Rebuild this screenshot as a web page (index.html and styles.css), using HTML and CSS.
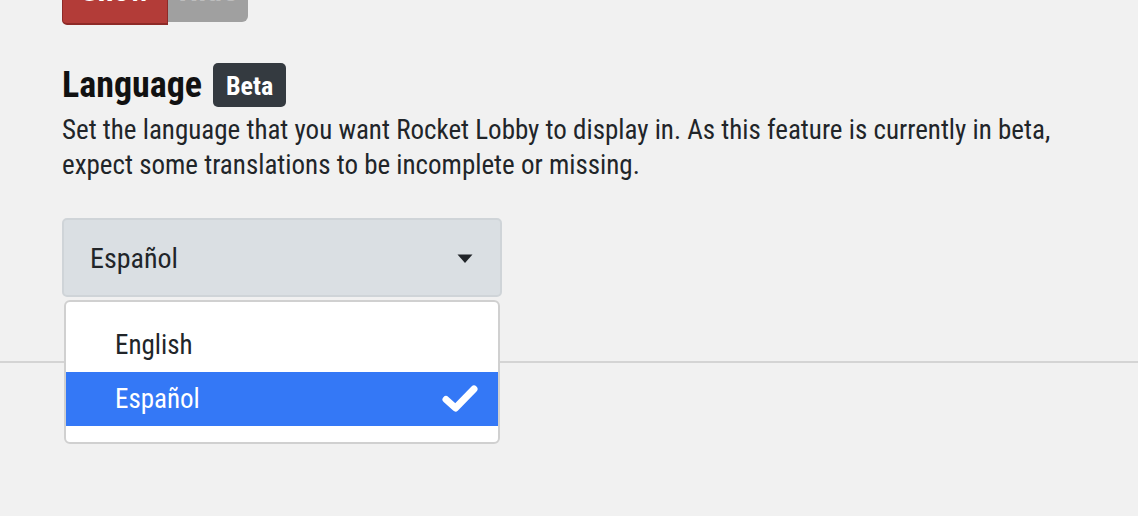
FILE: index.html
```html
<!DOCTYPE html>
<html lang="en">
<head>
<meta charset="utf-8">
<title>Settings</title>
<link rel="stylesheet" href="styles.css">
</head>
<body>
<div class="page">
  <section class="settings">
    <div class="toggle">
      <button class="btn btn-on">Show</button>
      <button class="btn btn-off">Hide</button>
    </div>
    <h2 class="title">Language <span class="badge">Beta</span></h2>
    <p class="desc">Set the language that you want Rocket Lobby to display in. As this feature is currently in beta, expect some translations to be incomplete or missing.</p>
    <div class="select-wrap">
      <div class="select">
        <span>Español</span>
        <svg class="caret" width="16" height="10" viewBox="0 0 16 10"><path d="M0.5 0.5 L15.5 0.5 L8 9 Z" fill="#212529"/></svg>
      </div>
      <ul class="menu">
        <li class="item">English</li>
        <li class="item active">Español
          <svg class="check" width="36" height="28" viewBox="0 0 36 28"><path d="M4 14.5 L13.5 23 L32 4" fill="none" stroke="#fff" stroke-width="7" stroke-linecap="round" stroke-linejoin="round"/></svg>
        </li>
      </ul>
    </div>
  </section>
  <hr class="divider">
</div>
</body>
</html>
```

FILE: styles.css
```css
* { box-sizing: border-box; }
html, body {
  margin: 0;
  padding: 0;
  background: #f1f1f1;
  height: 100%;
  overflow: hidden;
}
body {
  font-family: "Roboto", "Liberation Sans", sans-serif;
  font-stretch: 75%;
  color: #212529;
}
.page { width: 100%; }
.settings {
  padding-left: 62px;
}
.toggle {
  display: flex;
  align-items: flex-start;
  margin-top: -28px;
}
.btn {
  font-family: inherit;
  font-stretch: 75%;
  font-weight: bold;
  font-size: 32px;
  line-height: 1;
  border: none;
  color: #fff;
  height: 50px;
  padding: 0 0 14px;
}
.btn-on {
  width: 106px;
  background: #b33c38;
  border: 1px solid #8e2a27;
  border-bottom-width: 2px;
  border-radius: 0 0 0 5px;
  height: 53px;
  padding-bottom: 17px;
}
.btn-off {
  width: 80px;
  background: #a0a0a0;
  color: #bdbdbd;
  border-radius: 0 0 6px 0;
}
.title {
  margin: 38px 0 0;
  font-size: 36px;
  font-weight: bold;
  line-height: 43px;
  display: flex;
  align-items: center;
  gap: 11px;
  color: #111;
}
.badge {
  display: inline-flex;
  align-items: center;
  justify-content: center;
  background: #343a40;
  color: #fff;
  font-size: 26px;
  height: 44px;
  width: 73px;
  border-radius: 5px;
  padding-top: 2px;
}
.desc {
  margin: 6px 0 0;
  font-size: 27px;
  line-height: 35px;
  max-width: 1040px;
}
.select-wrap {
  position: relative;
  width: 440px;
  margin-top: 35px;
}
.select {
  height: 79px;
  background: #dadfe3;
  border: 2px solid #cfd4d8;
  border-radius: 5px;
  display: flex;
  align-items: center;
  justify-content: space-between;
  padding: 2px 27px 0 26px;
  font-size: 28px;
}
.caret { display: block; }
.menu {
  position: absolute;
  left: 2px;
  top: 82px;
  width: 436px;
  margin: 0;
  padding: 16px 0;
  list-style: none;
  background: #fff;
  border: 2px solid #d0d0d0;
  border-radius: 6px;
  z-index: 2;
}
.item {
  height: 54px;
  display: flex;
  align-items: center;
  justify-content: space-between;
  padding: 0 20px 0 49px;
  font-size: 27px;
}
.item.active {
  background: #3478f6;
  color: #fff;
}
.check { display: block; }
.divider {
  margin: 64px 0 0;
  border: none;
  height: 2px;
  background: #d4d4d4;
}
```
